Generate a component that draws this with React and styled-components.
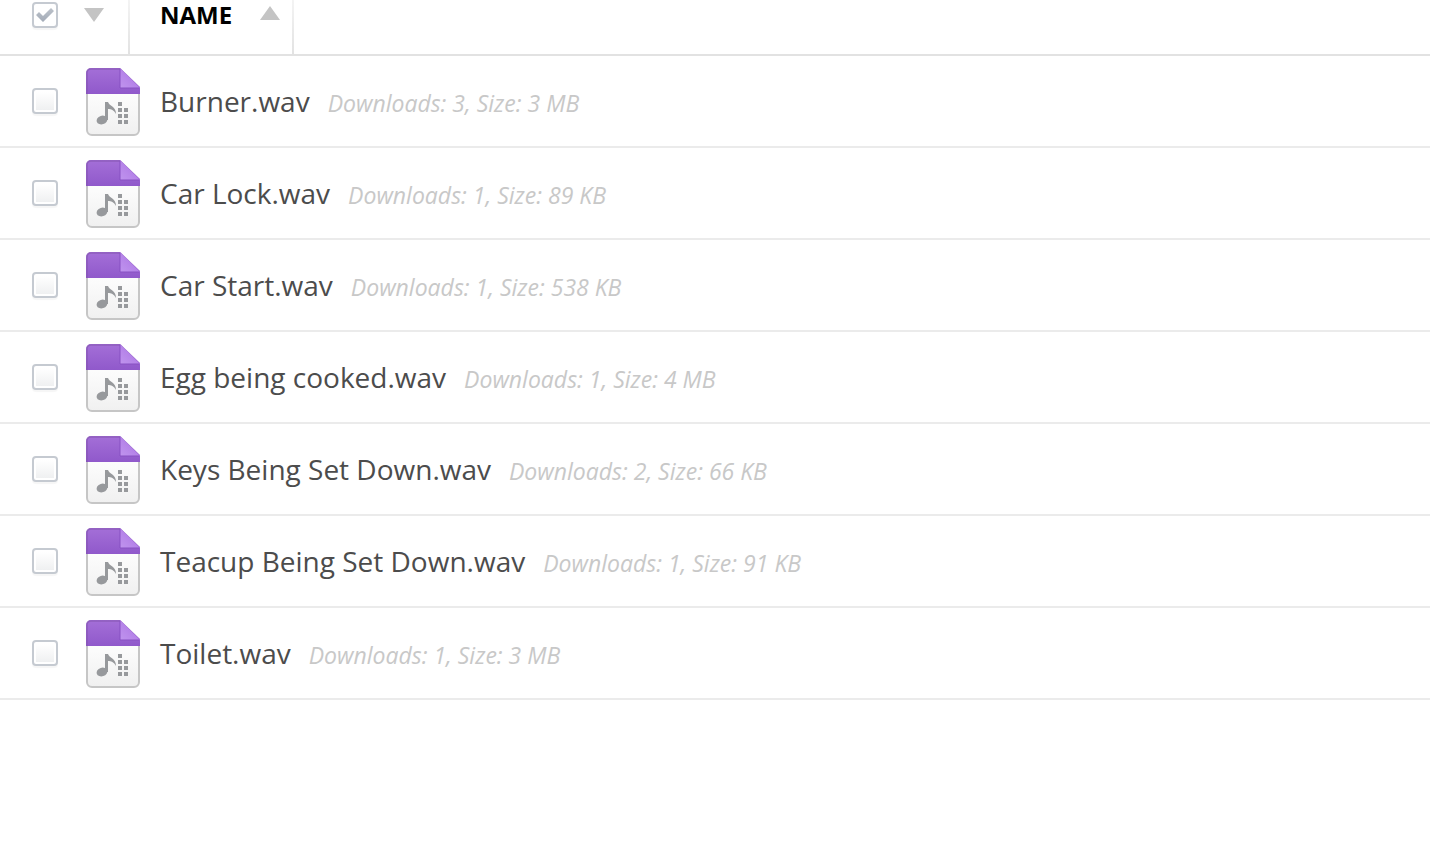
import React, { useState } from 'react';
import styled, { createGlobalStyle } from 'styled-components';

const GlobalStyle = createGlobalStyle`
  body {
    margin: 0;
    background: #fff;
    color: #4c4c4c;
    font-family: "Open Sans", sans-serif;
  }
`;

const FileTable = styled.table`
  width: 100%;
  table-layout: fixed;
  border-collapse: separate;
  border-spacing: 0;
`;

const Column = styled.col`
  width: ${({ $width }) => $width || 'auto'};
`;

const HeadCell = styled.th`
  height: 54px;
  padding: 0;
  border-bottom: 2px solid #e2e2e2;
  text-align: left;
  vertical-align: top;
`;

const HeadGroup = styled.div`
  display: flex;
  align-items: center;
  box-sizing: border-box;
  width: ${({ $width }) => $width || 'auto'};
  height: 54px;
  padding: 0 12px 24px ${({ $left }) => $left};
  gap: 26px;
  border-right: 2px solid;
  border-image: linear-gradient(#f4f4f4, #e2e2e2) 1;
`;

const SelectMenu = styled.button`
  display: flex;
  padding: 0;
  border: 0;
  background: none;
  cursor: pointer;
`;

const SortButton = styled.button`
  display: flex;
  align-items: center;
  justify-content: space-between;
  width: 100%;
  padding: 0;
  border: 0;
  background: none;
  color: #000;
  font: 700 24px/30px "Open Sans", sans-serif;
  cursor: pointer;
`;

const Check = styled.span`
  display: grid;
  width: 26px;
  height: 26px;

  > * {
    grid-area: 1 / 1;
  }
`;

const CheckInput = styled.input`
  appearance: none;
  box-sizing: border-box;
  width: 26px;
  height: 26px;
  margin: 0;
  padding: 2px;
  border: 2px solid #c5cad1;
  border-radius: 4px;
  background: linear-gradient(#fff, #eff0f1) content-box #fff;
  box-shadow: 0 2px 1px #f6f6f6;

  &:checked {
    background: #fff;
  }
`;

const CheckMark = styled.svg`
  place-self: center;
  pointer-events: none;
`;

const BodyCell = styled.td`
  height: 90px;
  padding: 0 0 0 ${({ $left }) => $left || '0'};
  border-bottom: 2px solid #ebebeb;
`;

const FileCell = styled.div`
  display: flex;
  align-items: center;
  padding-top: 2px;
`;

const FileText = styled.div`
  display: flex;
  align-items: baseline;
  gap: 18px;
  padding-left: 18px;
  line-height: 40px;
  white-space: nowrap;
`;

const FileName = styled.label`
  font-size: 28px;
`;

const FileInfo = styled.em`
  color: #c8c8c8;
  font-size: 23px;
`;

const files = [
  { name: 'Burner.wav', downloads: 3, size: '3 MB' },
  { name: 'Car Lock.wav', downloads: 1, size: '89 KB' },
  { name: 'Car Start.wav', downloads: 1, size: '538 KB' },
  { name: 'Egg being cooked.wav', downloads: 1, size: '4 MB' },
  { name: 'Keys Being Set Down.wav', downloads: 2, size: '66 KB' },
  { name: 'Teacup Being Set Down.wav', downloads: 1, size: '91 KB' },
  { name: 'Toilet.wav', downloads: 1, size: '3 MB' },
];

function Checkbox({ checked, ...props }) {
  return (
    <Check>
      <CheckInput type="checkbox" checked={checked} {...props} />
      {checked && (
        <CheckMark width="20" height="16" viewBox="0 0 20 16" aria-hidden="true">
          <defs>
            <linearGradient id="mark" x1="0" y1="0" x2="0" y2="1">
              <stop offset="0" stopColor="#bcc2ca" />
              <stop offset="1" stopColor="#a3abb7" />
            </linearGradient>
          </defs>
          <path d="M1 8l3-3 4 4 8-8 3 3L8 15z" fill="url(#mark)" />
        </CheckMark>
      )}
    </Check>
  );
}

function Arrow({ up }) {
  return (
    <svg width="20" height={up ? 18 : 14} viewBox={up ? '0 0 20 18' : '0 0 20 14'} aria-hidden="true">
      <path d={up ? 'M10 0l10 14H0z' : 'M0 0h20L10 14z'} fill="#c4c4c4" />
    </svg>
  );
}

function AudioIcon() {
  return (
    <svg width="58" height="70" viewBox="0 0 58 70" aria-hidden="true">
      <defs>
        <linearGradient id="paper" x1="0" y1="0" x2="0" y2="1">
          <stop offset="0.4" stopColor="#fcfcfc" />
          <stop offset="1" stopColor="#f0f0f0" />
        </linearGradient>
        <linearGradient id="cover" x1="0" y1="0" x2="0" y2="1">
          <stop offset="0" stopColor="#a46fd8" />
          <stop offset="1" stopColor="#9059cb" />
        </linearGradient>
        <linearGradient id="fold" x1="0" y1="1" x2="1" y2="0">
          <stop offset="0" stopColor="#c094ee" />
          <stop offset="1" stopColor="#a971e2" />
        </linearGradient>
      </defs>
      <path d="M7 2h29l19 19v42a5 5 0 0 1-5 5H8a5 5 0 0 1-5-5V6a4 4 0 0 1 4-4z" fill="url(#paper)" stroke="#c6c6c6" strokeWidth="2" />
      <path d="M2 27V6a5 5 0 0 1 5-5h29l20 19v7z" fill="url(#cover)" />
      <path d="M3 27V6a4 4 0 0 1 4-4h29" fill="none" stroke="#8053ab" strokeWidth="1.5" opacity="0.6" />
      <path d="M36 1l20 20H36z" fill="url(#fold)" />
      <path d="M36 2v19h19" fill="none" stroke="#8750c2" />
      <g fill="#97999c">
        <ellipse cx="18" cy="53" rx="5.5" ry="4.3" transform="rotate(-18 18 53)" />
        <path d="M21 35h3c1 4 8 4 8 12-2-4-5-5-8-5v11h-3z" />
        <path d="M34 35h4v4h-4zM34 41h4v4h-4zM34 47h4v4h-4zM34 53h4v4h-4zM40 41h4v4h-4zM40 47h4v4h-4zM40 53h4v4h-4z" />
      </g>
    </svg>
  );
}

export default function App() {
  const [selected, setSelected] = useState([]);
  const [allChecked, setAllChecked] = useState(true);

  const toggle = (name) => {
    setSelected(selected.includes(name)
      ? selected.filter((item) => item !== name)
      : [...selected, name]);
  };

  return (
    <>
      <GlobalStyle />
      <FileTable>
        <colgroup>
          <Column $width="84px" />
          <Column $width="46px" />
          <Column />
        </colgroup>
        <thead>
          <tr>
            <HeadCell colSpan={2}>
              <HeadGroup $left="32px">
                <Checkbox
                  checked={allChecked}
                  aria-label="Select all"
                  onChange={() => setAllChecked(!allChecked)}
                />
                <SelectMenu type="button" aria-label="Selection options">
                  <Arrow />
                </SelectMenu>
              </HeadGroup>
            </HeadCell>
            <HeadCell>
              <HeadGroup $left="30px" $width="164px">
                <SortButton type="button">
                  NAME
                  <Arrow up />
                </SortButton>
              </HeadGroup>
            </HeadCell>
          </tr>
        </thead>
        <tbody>
          {files.map((file, index) => (
            <tr key={file.name}>
              <BodyCell $left="32px">
                <Checkbox
                  id={`file-${index}`}
                  checked={selected.includes(file.name)}
                  onChange={() => toggle(file.name)}
                />
              </BodyCell>
              <BodyCell colSpan={2}>
                <FileCell>
                  <AudioIcon />
                  <FileText>
                    <FileName htmlFor={`file-${index}`}>{file.name}</FileName>
                    <FileInfo>{`Downloads: ${file.downloads}, Size: ${file.size}`}</FileInfo>
                  </FileText>
                </FileCell>
              </BodyCell>
            </tr>
          ))}
        </tbody>
      </FileTable>
    </>
  );
}
